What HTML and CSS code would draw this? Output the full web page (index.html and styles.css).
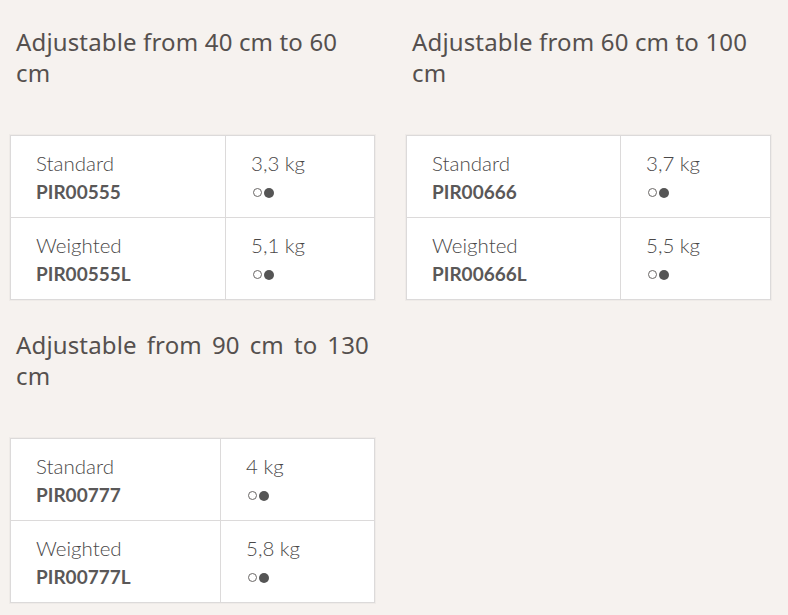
FILE: index.html
```html
<!DOCTYPE html>
<html lang="en">
<head>
<meta charset="utf-8">
<title>Sizes</title>
<link rel="stylesheet" href="styles.css">
</head>
<body>
<main class="grid">
  <section class="block">
    <h2 class="title">Adjustable from 40 cm to 60 cm</h2>
    <table class="spec">
      <tr>
        <td class="c1"><span class="name">Standard</span><span class="code">PIR00555</span></td>
        <td class="c2"><span class="name">3,3 kg</span><span class="dots"><i class="dot open"></i><i class="dot full"></i></span></td>
      </tr>
      <tr>
        <td class="c1"><span class="name">Weighted</span><span class="code">PIR00555L</span></td>
        <td class="c2"><span class="name">5,1 kg</span><span class="dots"><i class="dot open"></i><i class="dot full"></i></span></td>
      </tr>
    </table>
  </section>
  <section class="block">
    <h2 class="title">Adjustable from 60 cm to 100 cm</h2>
    <table class="spec">
      <tr>
        <td class="c1 w214"><span class="name">Standard</span><span class="code">PIR00666</span></td>
        <td class="c2"><span class="name">3,7 kg</span><span class="dots"><i class="dot open"></i><i class="dot full"></i></span></td>
      </tr>
      <tr>
        <td class="c1 w214"><span class="name">Weighted</span><span class="code">PIR00666L</span></td>
        <td class="c2"><span class="name">5,5 kg</span><span class="dots"><i class="dot open"></i><i class="dot full"></i></span></td>
      </tr>
    </table>
  </section>
  <section class="block">
    <h2 class="title justify">Adjustable from 90 cm to 130 cm</h2>
    <table class="spec">
      <tr>
        <td class="c1 w210"><span class="name">Standard</span><span class="code">PIR00777</span></td>
        <td class="c2"><span class="name">4 kg</span><span class="dots"><i class="dot open"></i><i class="dot full"></i></span></td>
      </tr>
      <tr>
        <td class="c1 w210"><span class="name">Weighted</span><span class="code">PIR00777L</span></td>
        <td class="c2"><span class="name">5,8 kg</span><span class="dots"><i class="dot open"></i><i class="dot full"></i></span></td>
      </tr>
    </table>
  </section>
</main>
</body>
</html>
```
FILE: styles.css
```css
* { box-sizing: border-box; }
html, body {
  margin: 0;
  background: #f6f2ef;
  color: #4f4c4b;
}
body {
  font-family: "Lato", "Noto Sans", sans-serif;
  width: 788px;
  height: 615px;
  overflow: hidden;
}
.grid {
  display: grid;
  grid-template-columns: 365px 365px;
  column-gap: 31px;
  row-gap: 29px;
  padding: 26px 0 0 10px;
  align-items: start;
}
.block {
  display: flex;
  flex-direction: column;
}
.title {
  margin: 0 0 47px 0;
  padding-left: 6px;
  padding-right: 6px;
  font-family: "Noto Sans", sans-serif;
  font-weight: 400;
  font-size: 24px;
  line-height: 31px;
  height: 62px;
  color: #55504e;
  letter-spacing: 0.15px;
}
.title.justify {
  text-align: justify;
  text-align-last: left;
}
.spec {
  width: 365px;
  border-collapse: collapse;
  background: #fff;
  border: 1px solid #dcdada;
  box-shadow: 0 0 0 1px #efebe8;
}
.spec td {
  border: 1px solid #dcdada;
  vertical-align: top;
  padding: 13px 10px 12px 25px;
  height: 81px;
}
.c1 { width: 215px; }
.c1.w214 { width: 214px; }
.c1.w210 { width: 210px; }
.name, .code, .dots {
  display: block;
  line-height: 28px;
  height: 28px;
}
.name {
  font-size: 20.5px;
  font-weight: 300;
  color: #4a4848;
}
.code {
  font-size: 19px;
  font-weight: 700;
  color: #5a5858;
  padding-top: 1px;
}
.dots {
  display: flex;
  align-items: center;
  gap: 2px;
  padding-left: 2px;
  padding-top: 3px;
}
.dot {
  display: block;
  border-radius: 50%;
}
.dot.open {
  width: 9px;
  height: 9px;
  border: 1px solid #6a6766;
}
.dot.full {
  width: 10px;
  height: 10px;
  background: #555;
}
```
